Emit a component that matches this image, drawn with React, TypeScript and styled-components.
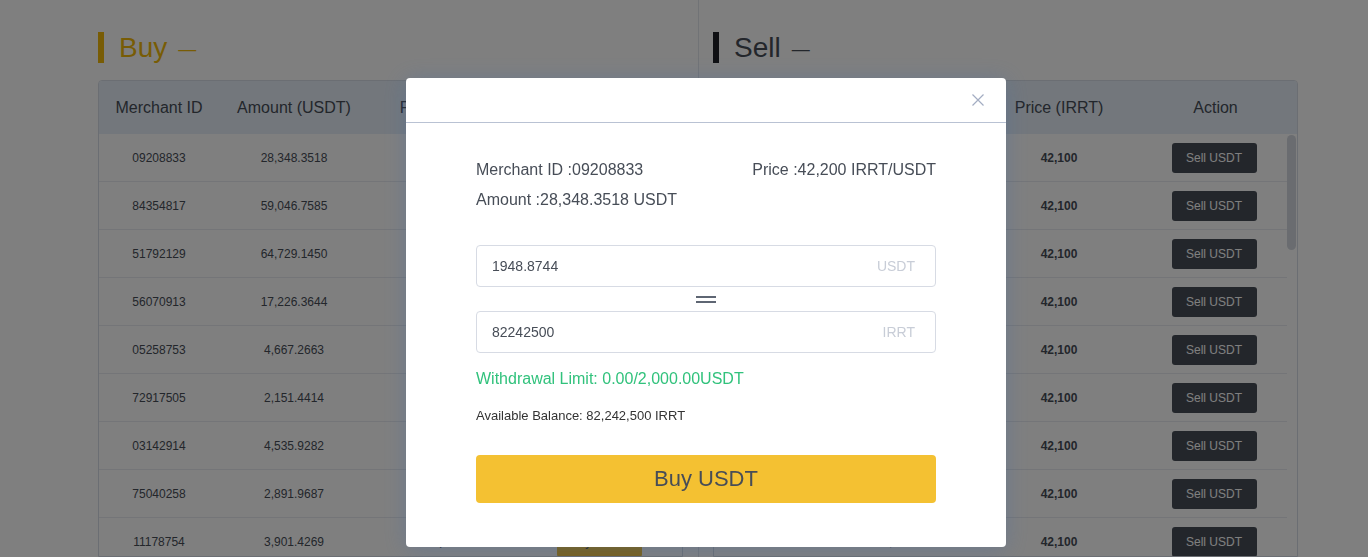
import React from 'react'
import styled, { createGlobalStyle } from 'styled-components'

const GlobalStyle = createGlobalStyle`
  html,
  body {
    margin: 0;
    padding: 0;
    overflow: hidden;
    background: #fff;
  }

  body {
    font-family: 'Liberation Sans', Arial, sans-serif;
    color: #474d57;
  }

  * {
    box-sizing: border-box;
  }
`

type Offer = {
  id: string
  amount: string
  price: string
}

const buyOffers: Offer[] = [
  { id: '09208833', amount: '28,348.3518', price: '42,200' },
  { id: '84354817', amount: '59,046.7585', price: '42,200' },
  { id: '51792129', amount: '64,729.1450', price: '42,200' },
  { id: '56070913', amount: '17,226.3644', price: '42,200' },
  { id: '05258753', amount: '4,667.2663', price: '42,200' },
  { id: '72917505', amount: '2,151.4414', price: '42,200' },
  { id: '03142914', amount: '4,535.9282', price: '42,200' },
  { id: '75040258', amount: '2,891.9687', price: '42,200' },
  { id: '11178754', amount: '3,901.4269', price: '42,200' },
]

const sellOffers: Offer[] = [
  { id: '38120547', amount: '12,480.2210', price: '42,100' },
  { id: '60418832', amount: '8,902.5531', price: '42,100' },
  { id: '27759104', amount: '31,006.7420', price: '42,100' },
  { id: '94021376', amount: '5,318.0096', price: '42,100' },
  { id: '15583620', amount: '22,715.4883', price: '42,100' },
  { id: '70236411', amount: '3,640.1175', price: '42,100' },
  { id: '48890257', amount: '9,127.3308', price: '42,100' },
  { id: '62314098', amount: '1,985.6624', price: '42,100' },
  { id: '30957781', amount: '14,203.9047', price: '42,100' },
]

type Side = 'buy' | 'sell'

const OfferTable = ({ side, offers }: { side: Side; offers: Offer[] }) => (
  <Table>
    <HeadRow>
      <span>Merchant ID</span>
      <span>Amount (USDT)</span>
      <span>Price (IRRT)</span>
      <span>Action</span>
    </HeadRow>
    <TableBody>
      <RowList>
        {offers.map((o) => (
          <BodyRow key={o.id}>
            <span>{o.id}</span>
            <span>{o.amount}</span>
            <PriceCell>{o.price}</PriceCell>
            <ActionCell>
              <ActionButton $side={side}>{side === 'buy' ? 'Buy USDT' : 'Sell USDT'}</ActionButton>
            </ActionCell>
          </BodyRow>
        ))}
      </RowList>
      <ScrollRail>
        <ScrollThumb />
      </ScrollRail>
    </TableBody>
  </Table>
)

const CloseIcon = () => (
  <svg width="12" height="12" viewBox="0 0 12 12" fill="none">
    <path d="M0.5 0.5L11.5 11.5M11.5 0.5L0.5 11.5" stroke="#a3adc2" strokeWidth="1.2" />
  </svg>
)

const App = () => {
  return (
    <>
      <GlobalStyle />
      <Page>
        <Section $side="buy">
          <SectionTitle $side="buy">
            <TitleBar $side="buy" />
            Buy
            <TitleDash>—</TitleDash>
          </SectionTitle>
          <OfferTable side="buy" offers={buyOffers} />
        </Section>

        <Section $side="sell">
          <SectionTitle $side="sell">
            <TitleBar $side="sell" />
            Sell
            <TitleDash>—</TitleDash>
          </SectionTitle>
          <OfferTable side="sell" offers={sellOffers} />
        </Section>
      </Page>

      <Overlay>
        <Modal>
          <ModalHeader>
            <CloseButton>
              <CloseIcon />
            </CloseButton>
          </ModalHeader>

          <ModalBody>
            <OrderInfo>
              <span>Merchant ID :09208833</span>
              <span>Price :42,200 IRRT/USDT</span>
              <span>Amount :28,348.3518 USDT</span>
            </OrderInfo>

            <Converter>
              <AmountField>
                <FieldValue>1948.8744</FieldValue>
                <FieldUnit>USDT</FieldUnit>
              </AmountField>
              <EqualsMark>
                <i />
                <i />
              </EqualsMark>
              <AmountField>
                <FieldValue>82242500</FieldValue>
                <FieldUnit>IRRT</FieldUnit>
              </AmountField>
            </Converter>

            <LimitText>Withdrawal Limit: 0.00/2,000.00USDT</LimitText>
            <BalanceText>Available Balance: 82,242,500 IRRT</BalanceText>

            <SubmitButton>Buy USDT</SubmitButton>
          </ModalBody>
        </Modal>
      </Overlay>
    </>
  )
}

export default App

const Page = styled.div`
  display: flex;
  height: 100vh;
  padding-left: 98px;
  overflow: hidden;
`

const Section = styled.section<{ $side: Side }>`
  display: flex;
  flex-direction: column;
  width: 600px;
  padding-top: 32px;
  padding-right: ${(p) => (p.$side === 'buy' ? '14px' : '0')};
  padding-left: ${(p) => (p.$side === 'sell' ? '14px' : '0')};
  border-left: ${(p) => (p.$side === 'sell' ? '1px solid #e3e7ed' : 'none')};
`

const SectionTitle = styled.h2<{ $side: Side }>`
  display: flex;
  align-items: center;
  height: 31px;
  margin: 0;
  font-size: 28px;
  font-weight: 400;
  line-height: 31px;
  color: ${(p) => (p.$side === 'buy' ? '#f0b90b' : '#474d57')};
`

const TitleBar = styled.span<{ $side: Side }>`
  width: 6px;
  height: 31px;
  margin-right: 15px;
  background: ${(p) => (p.$side === 'buy' ? '#f0b90b' : '#1e2026')};
`

const TitleDash = styled.span`
  margin-left: 11px;
  margin-top: 2px;
  font-size: 18px;
  line-height: 18px;
`

const Table = styled.div`
  width: 585px;
  margin-top: 17px;
  border: 1px solid #d6dde6;
  border-radius: 4px 4px 0 0;
  overflow: hidden;
`

const HeadRow = styled.div`
  display: grid;
  grid-template-columns: 120px 150px 150px 1fr;
  align-items: center;
  height: 53px;
  background: #e6eff9;
  font-size: 16px;
  color: #474d57;
  text-align: center;
`

const TableBody = styled.div`
  display: flex;
`

const RowList = styled.div`
  flex: 1;
  min-width: 0;
`

const BodyRow = styled.div`
  display: grid;
  grid-template-columns: 120px 150px 150px 1fr;
  align-items: center;
  height: 48px;
  border-bottom: 1px solid #e8ebf0;
  font-size: 12px;
  color: #474d57;
  text-align: center;
`

const PriceCell = styled.span`
  font-weight: 700;
`

const ActionCell = styled.span`
  display: flex;
  justify-content: center;
  padding-left: 7px;
`

const ActionButton = styled.button<{ $side: Side }>`
  width: 85px;
  height: 30px;
  border: none;
  border-radius: 3px;
  font-family: inherit;
  font-size: 12px;
  cursor: pointer;
  background: ${(p) => (p.$side === 'buy' ? '#f4c132' : '#474d57')};
  color: ${(p) => (p.$side === 'buy' ? '#474d57' : '#fff')};
`

const ScrollRail = styled.div`
  width: 10px;
  padding-top: 1px;
`

const ScrollThumb = styled.div`
  width: 9px;
  height: 115px;
  border-radius: 5px;
  background: #d5d9e1;
`

const Overlay = styled.div`
  position: fixed;
  inset: 0;
  display: flex;
  align-items: flex-start;
  padding: 78px 0 0 406px;
  background: rgba(0, 0, 0, 0.5);
`

const Modal = styled.div`
  width: 600px;
  height: 469px;
  background: #fff;
  border-radius: 4px;
  box-shadow: 0 2px 22px rgba(70, 110, 170, 0.35);
`

const ModalHeader = styled.div`
  display: flex;
  align-items: center;
  justify-content: flex-end;
  height: 45px;
  padding-right: 22px;
  border-bottom: 1px solid #b9c2d3;
`

const CloseButton = styled.button`
  display: flex;
  padding: 0;
  border: none;
  background: none;
  cursor: pointer;
`

const ModalBody = styled.div`
  padding: 32px 70px 0;
`

const OrderInfo = styled.div`
  display: grid;
  grid-template-columns: 1fr auto;
  font-size: 16px;
  line-height: 30px;
  color: #474d57;
`

const Converter = styled.div`
  margin-top: 30px;
`

const AmountField = styled.div`
  display: flex;
  align-items: center;
  justify-content: space-between;
  height: 42px;
  padding: 0 20px 0 15px;
  border: 1px solid #d7dbe4;
  border-radius: 4px;
  font-size: 14px;
`

const FieldValue = styled.span`
  color: #474d57;
`

const FieldUnit = styled.span`
  color: #c8cdd7;
`

const EqualsMark = styled.div`
  display: flex;
  flex-direction: column;
  align-items: center;
  justify-content: center;
  gap: 3px;
  height: 24px;

  i {
    display: block;
    width: 20px;
    height: 2px;
    background: #5e6673;
  }
`

const LimitText = styled.div`
  margin-top: 14px;
  font-size: 16px;
  line-height: 24px;
  color: #31c27c;
`

const BalanceText = styled.div`
  margin-top: 13px;
  font-size: 13px;
  line-height: 24px;
  color: #333;
`

const SubmitButton = styled.button`
  display: block;
  width: 100%;
  height: 48px;
  margin-top: 27px;
  border: none;
  border-radius: 4px;
  background: #f4c132;
  font-family: inherit;
  font-size: 22px;
  color: #474d57;
  cursor: pointer;
`
